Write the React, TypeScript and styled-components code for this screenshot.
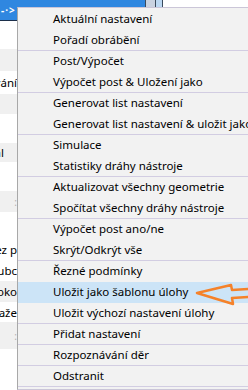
import React from 'react';
import styled, { createGlobalStyle } from 'styled-components';

const GlobalStyle = createGlobalStyle`
  html, body { margin: 0; padding: 0; background: #fff; }
  body { font-family: 'Noto Sans', 'Open Sans', sans-serif; }
`;

const Screen = styled.div`
  position: relative;
  width: 248px;
  height: 390px;
  overflow: hidden;
  background: #fff;
`;

const TopStrip = styled.div`
  display: flex;
  height: 20px;
  border-bottom: 1px solid #1c2f4a;
`;

const HeaderCell = styled.div`
  width: 146px;
  background: #2f87e0;
  color: #fff;
  font-size: 10px;
  font-weight: bold;
  line-height: 20px;
  padding-left: 1px;
  letter-spacing: 1px;
`;

const ToolTile = styled.div<{ $bg: string; $w: number }>`
  width: ${p => p.$w}px;
  background: ${p => p.$bg};
  border-left: 1px solid #3a4a5c;
`;

const PropertyList = styled.div`
  display: flex;
  flex-direction: column;
  width: 17px;
`;

const PropRow = styled.div<{ $h: number; $shade?: boolean; $pad?: number }>`
  height: ${p => p.$h}px;
  background: ${p => (p.$shade ? '#f0f0f0' : '#fff')};
  display: flex;
  align-items: center;
  justify-content: flex-end;
  padding-right: ${p => p.$pad ?? 0}px;
  overflow: hidden;
  white-space: nowrap;
  font-size: 11.5px;
  color: #000;
`;

const Grip = styled.span`
  color: #b0b0b0;
  font-size: 10px;
`;

const Menu = styled.div`
  position: absolute;
  left: 17px;
  top: 7px;
  width: 270px;
  background: #f2f2f2;
  border: 1px solid #cbc6d8;
  border-left-color: #a8a8a8;
  padding: 1px 0 2px;
  display: flex;
  flex-direction: column;
`;

const MenuItem = styled.div<{ $sep?: boolean; $active?: boolean }>`
  height: 20px;
  line-height: 20px;
  padding-left: 35px;
  font-size: 11.5px;
  color: #000;
  white-space: nowrap;
  background: ${p => (p.$active ? '#cce4f7' : 'transparent')};
  border-bottom: 1px solid ${p => (p.$sep ? '#d2cde2' : 'transparent')};
`;

const Arrow = styled.svg`
  position: absolute;
  left: 194px;
  top: 280px;
  width: 54px;
  height: 28px;
`;

const items: { label: string; sep?: boolean; active?: boolean }[] = [
  { label: 'Aktuální nastavení' },
  { label: 'Pořadí obrábění', sep: true },
  { label: 'Post/Výpočet' },
  { label: 'Výpočet post & Uložení jako', sep: true },
  { label: 'Generovat list nastavení' },
  { label: 'Generovat list nastavení & uložit jako', sep: true },
  { label: 'Simulace' },
  { label: 'Statistiky dráhy nástroje', sep: true },
  { label: 'Aktualizovat všechny geometrie' },
  { label: 'Spočítat všechny dráhy nástroje', sep: true },
  { label: 'Výpočet post ano/ne' },
  { label: 'Skrýt/Odkrýt vše', sep: true },
  { label: 'Řezné podmínky' },
  { label: 'Uložit jako šablonu úlohy', active: true },
  { label: 'Uložit výchozí nastavení úlohy', sep: true },
  { label: 'Přidat nastavení', sep: true },
  { label: 'Rozpoznávání děr', sep: true },
  { label: 'Odstranit', sep: true },
];

const rows: { h: number; shade?: boolean; text?: string; pad?: number; grip?: boolean }[] = [
  { h: 28 },
  { h: 22, shade: true },
  { h: 23, text: 'Zobrazení zpracování' },
  { h: 20, shade: true },
  { h: 29 },
  { h: 19, shade: true, text: 'Materiál', pad: 13 },
  { h: 29 },
  { h: 21, shade: true, grip: true },
  { h: 27 },
  { h: 21, text: 'Řez p' },
  { h: 21, text: 'Hrubc' },
  { h: 21, shade: true, text: 'Boko' },
  { h: 20, text: 'Obraže' },
  { h: 27, shade: true, grip: true },
  { h: 40 },
];

export default function App() {
  return (
    <Screen>
      <GlobalStyle />
      <TopStrip>
        <HeaderCell>-·&gt;</HeaderCell>
        <ToolTile $bg="#c9d2e0" $w={9} />
        <ToolTile $bg="#bcd8f2" $w={6} />
        <ToolTile $bg="#fff" $w={86} />
      </TopStrip>
      <PropertyList>
        {rows.map((r, i) => (
          <PropRow key={'row' + i} $h={r.h} $shade={r.shade} $pad={r.pad}>
            {r.grip ? <Grip>:</Grip> : r.text}
          </PropRow>
        ))}
      </PropertyList>
      <Menu>
        {items.map((it, i) => (
          <MenuItem key={'item' + i} $sep={it.sep} $active={it.active}>
            {it.label}
          </MenuItem>
        ))}
      </Menu>
      <Arrow viewBox="0 0 54 28">
        <path
          d="M54 9 L38 10 L37 5 L3 13 L39 24 L38 18 L54 17"
          fill="none"
          stroke="#f5822a"
          strokeWidth={2.5}
          strokeLinejoin="round"
          strokeLinecap="round"
        />
      </Arrow>
    </Screen>
  );
}
